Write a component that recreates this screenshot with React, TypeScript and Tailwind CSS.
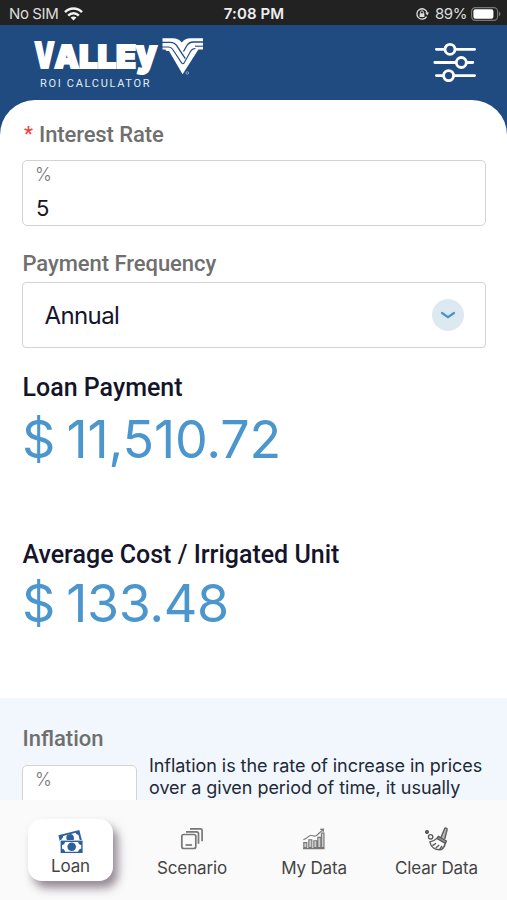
import type { ReactNode } from 'react';

const ROBOTO = "font-['Roboto',sans-serif]";

function StatusBar() {
  return (
    <div className="grid h-[25px] grid-cols-3 items-center bg-[#222222] pt-[2px] text-[15px] leading-[20px] text-[#dedede]">
      <div className="flex items-center gap-[6px] pl-[9px]">
        <span className="tracking-[-0.4px]">No SIM</span>
        <svg width="19" height="14" viewBox="0 0 19 14" fill="none" stroke="#f2f2f2" strokeWidth="2.5">
          <path d="M1 5.2C6 .3 13 .3 18 5.2" />
          <path d="M4.2 8.6c3-3 7.6-3 10.6 0" />
          <path d="M6.6 10.6c1.8-1.6 4-1.6 5.8 0L9.5 13.6Z" fill="#f2f2f2" stroke="none" />
        </svg>
      </div>
      <div className="pl-[1px] text-center font-semibold tracking-[0.1px] text-[#efefef]">7:08 PM</div>
      <div className="flex items-center justify-end pr-[6px]">
        <svg className="mr-[6px]" width="14" height="14" viewBox="0 0 14 14" fill="none" stroke="#dedede">
          <path d="M11.6 9.6A5.2 5.2 0 1 1 12.2 6" strokeWidth="1.3" />
          <path d="M10.2 5.6h3.8l-1.8 2.8Z" fill="#dedede" stroke="none" />
          <rect x="4.6" y="6.2" width="4.8" height="3.8" rx=".6" fill="#dedede" stroke="none" />
          <path d="M5.6 6.4V5.2a1.4 1.4 0 0 1 2.8 0v1.2" strokeWidth="1" />
        </svg>
        <span className="tracking-[-0.4px]">89%</span>
        <svg className="ml-[4px]" width="30" height="14" viewBox="0 0 30 14">
          <rect x=".6" y=".6" width="26" height="12.8" rx="3.8" fill="none" stroke="#777" strokeWidth="1.2" />
          <rect x="2.4" y="2.2" width="20" height="9.6" rx="2" fill="#fff" />
          <path d="M28 4.8c2 .8 2 3.6 0 4.4Z" fill="#777" />
        </svg>
      </div>
    </div>
  );
}

function Logo() {
  return (
    <svg
      width="172"
      height="56"
      viewBox="33 35 172 56"
      className="overflow-visible font-['Inter',sans-serif]"
      fill="#fff"
    >
      <text fontWeight="900" stroke="#fff" strokeWidth="2">
        <tspan x="34.5" y="68" fontSize="36" textLength="20" lengthAdjust="spacingAndGlyphs">V</tspan>
        <tspan x="54.5" y="67.7" fontSize="31" textLength="24.5" lengthAdjust="spacingAndGlyphs">A</tspan>
        <tspan x="79" y="67.7" fontSize="31" textLength="18.5" lengthAdjust="spacingAndGlyphs">L</tspan>
        <tspan x="97.5" y="67.7" fontSize="31" textLength="18.5" lengthAdjust="spacingAndGlyphs">L</tspan>
        <tspan x="116" y="67.7" fontSize="31" textLength="20" lengthAdjust="spacingAndGlyphs">E</tspan>
        <tspan x="136" y="66" fontSize="37" textLength="21" lengthAdjust="spacingAndGlyphs">y</tspan>
      </text>
      {/* Emblem */}
      <path d="M162.5 38.3H173q5.2 0 8.8 4.2 3.4-4.2 8.6-4.2H203v11.2h-4.6l-15.8 24.7-13.6-23.2h-2.5l-1.2-1.5H162.5Z" />
      <g fill="none" stroke="#1f4b80" strokeWidth="1.3">
        <path d="M162 42.3h8.5c3 0 4.6 1 6.2 3.4l8.6 13" />
        <path d="M203.5 42h-10.3c-3.4 0-5 1.3-6.6 4L183.5 51.5" />
        <path d="M162 47h6.6c2 0 3 .7 4 2.3l9 13.6c.8 1.2 1.7 1.2 2.5 0l6.5-11.6c1.1-2 2.2-2.8 4.8-2.8" strokeWidth="1.1" />
        <path d="M203.5 46.2h-8.5" strokeWidth="1.1" />
      </g>
      <circle cx="187.3" cy="73" r="1.3" fill="none" stroke="#a9c4e2" strokeWidth=".7" />
      <text
        x="40"
        y="87.3"
        fontSize="11"
        fill="#e0ecf8"
        textLength="109.5"
        className={ROBOTO}
      >
        ROI CALCULATOR
      </text>
    </svg>
  );
}

function SlidersIcon() {
  return (
    <svg width="44" height="42" viewBox="0 0 44 42" fill="none" stroke="#fff" strokeWidth="2.8" strokeLinecap="round">
      <path d="M3.4 7.3H11M23 7.3h18.6M1.8 20.5H22M34 20.5h5.8M3.4 33.6H10M22 33.6h19.6" />
      <circle cx="17" cy="7.3" r="5" />
      <circle cx="28.3" cy="20.5" r="5" />
      <circle cx="15.6" cy="33.6" r="5" />
    </svg>
  );
}

function MoneyIcon() {
  return (
    <svg width="26" height="24" viewBox="0 0 26 24">
      <g transform="rotate(-14 12 9)">
        <rect x="1.6" y="2.6" width="21.6" height="13" fill="#2d609b" />
        <path d="M6 4.4h13c.2 1.6.9 2.3 2.2 2.5v6H3.6v-6C5 6.6 5.8 6 6 4.4Z" fill="#fff" />
        <circle cx="12.4" cy="8" r="3.8" fill="#2d609b" />
      </g>
      <rect x="2" y="10" width="23" height="13.4" fill="#fff" />
      <rect x="2.6" y="10.6" width="22" height="12.4" fill="#2d609b" />
      <path d="M7 12h13.2c.2 1.8 1.2 2.8 3 3v3.8c-1.8.2-2.8 1.2-3 3H7c-.2-1.8-1.2-2.8-3-3V15c1.8-.2 2.8-1.2 3-3Z" fill="#fff" />
      <circle cx="13.7" cy="16.8" r="4.3" fill="#2d609b" />
    </svg>
  );
}

function LayersIcon() {
  return (
    <svg width="24" height="24" viewBox="0 0 24 24" fill="none" stroke="#777" strokeWidth="1.7">
      <rect x="1.8" y="7.5" width="14" height="14" rx="2" />
      <path d="M6 4.8h10.5a2 2 0 0 1 2 2v10M10 1.8h10.5a1.6 1.6 0 0 1 1.6 1.6v10.8" />
      <path d="M5.5 18h6.6" />
    </svg>
  );
}

function ChartIcon() {
  return (
    <svg width="24" height="22" viewBox="0 0 24 22" fill="#ccc" stroke="#777" strokeWidth="1.1">
      <path d="M1.8 14.6h3v5h-3zM6.8 11.8h3v7.8h-3zM11.8 12.8h3v6.8h-3zM15.8 9.4h3v10.2h-3zM19.4 5h2.6v14.6h-2.6z" />
      <path d="M1.4 11.6C5 11 7 7 9 7.2c2 .1 3 1.8 5 .6 2.5-1.6 4-4 7.2-6.2M18.2 1.4l3.3-.3-.4 3.2M1 20.6h21.5" fill="none" />
    </svg>
  );
}

function BroomIcon() {
  return (
    <svg width="26" height="26" viewBox="0 0 26 26" fill="none" stroke="#5c5c5c" strokeWidth="1.4" strokeLinejoin="round">
      <path d="m17 11.4 3.6-8.7c.6-1.2 2.9-.5 2.5.9l-2.4 9.4" fill="#bbb" />
      <path d="m14.4 10.3 8 4.7-1 2.4-8.6-5Z" fill="#999" />
      <path d="M12.8 12.4c-2 2.2-4.2 3.2-7 3.5 1.2 5.6 5.6 8.5 11.5 7.7 2.4-1.5 3.6-3.6 3.8-6.2" />
      <path d="m8.4 19.6 3.6-2.2M11.8 22l3.4-3.1M15.7 23.4l2.3-3.6" />
      <circle cx="6.6" cy="10.8" r="2.2" />
      <circle cx="3" cy="6" r="1.4" fill="#5c5c5c" />
    </svg>
  );
}

function TabItem({ icon, label, className }: { icon: ReactNode; label: string; className: string }) {
  return (
    <div className={`flex flex-col items-center ${className}`}>
      <div className="flex h-[26px] items-center justify-center">{icon}</div>
      <span className="mt-[4px] leading-[24px] tracking-[-0.15px] whitespace-nowrap">{label}</span>
    </div>
  );
}

export default function App() {
  return (
    <div className="flex h-[900px] w-[507px] flex-col overflow-hidden bg-[#1f4b80] font-['Inter',sans-serif] text-[#14142a]">
      <StatusBar />

      {/* Header */}
      <header className="flex h-[75px] shrink-0 items-start justify-between pt-[10px] pr-[30px] pl-[33px]">
        <Logo />
        <div className="pt-[7px]">
          <SlidersIcon />
        </div>
      </header>

      {/* Loan form */}
      <main className="flex h-[598px] shrink-0 flex-col rounded-t-[35px] bg-white px-[22px]">
        <div className={`mt-[20px] flex h-[28px] items-center pl-[2px] text-[22px] font-medium text-[#6f6f6f] ${ROBOTO}`}>
          <span className="mr-[6px] w-[9px] text-[20px] text-[#f04438]">*</span>
          <span className="tracking-[-0.1px]">Interest Rate</span>
        </div>
        <div className="mt-[12px] flex h-[66px] w-[464px] flex-col rounded-[5px] border-[1.5px] border-[#d3d3d3] pl-[12px]">
          <span className="mt-[3px] text-[18px] leading-[22px] font-light text-[#777]">%</span>
          <span className="mt-[8px] pl-[1px] text-[22px] leading-[28px]">5</span>
        </div>

        <div className={`mt-[24px] h-[28px] pl-[0.5px] text-[22px] leading-[28px] font-medium tracking-[-0.05px] text-[#6f6f6f] ${ROBOTO}`}>
          Payment Frequency
        </div>
        <div className="mt-[4px] flex h-[66px] w-[464px] items-center justify-between rounded-[4px] border-[1.5px] border-[#d3d3d3] pr-[21px] pl-[21.5px]">
          <span className="pt-[1px] text-[24px] tracking-[-0.6px]">Annual</span>
          <span className="flex size-[32px] items-center justify-center rounded-full bg-[#dce9f1]">
            <svg width="16" height="10" viewBox="0 0 16 10" fill="none" stroke="#4b93c6" strokeWidth="2.2" strokeLinecap="round">
              <path d="m2 3 6 4.2 6-4.2" />
            </svg>
          </span>
        </div>

        <div className={`mt-[25px] h-[30px] pl-[0.5px] text-[25px] leading-[30px] font-medium ${ROBOTO}`}>
          Loan Payment
        </div>
        <div className="mt-[7px] h-[60px] text-[52px] leading-[60px] tracking-[-0.2px] text-[#4b96cd] [word-spacing:-3px]">
          $ 11,510.72
        </div>

        <div className={`mt-[70px] h-[30px] pl-[0.5px] text-[25px] leading-[30px] font-medium ${ROBOTO}`}>
          Average Cost / Irrigated Unit
        </div>
        <div className="mt-[4px] h-[60px] text-[52px] leading-[60px] tracking-[-0.4px] text-[#4b96cd] [word-spacing:-3px]">
          $ 133.48
        </div>
      </main>

      {/* Inflation */}
      <section className="flex h-[102px] shrink-0 overflow-hidden bg-[#f1f7fd] pl-[22px]">
        <div className="w-[127px] shrink-0">
          <div className={`mt-[27px] pl-[0.5px] text-[22px] leading-[28px] font-medium text-[#6f6f6f] ${ROBOTO}`}>Inflation</div>
          <div className="mt-[12px] h-[66px] w-[115px] rounded-[5px] border-[1.5px] border-[#d3d3d3] bg-white pl-[12px]">
            <span className="mt-[3px] block text-[18px] leading-[22px] font-light text-[#777]">%</span>
          </div>
        </div>
        <p className="mt-[56.5px] text-[18px] leading-[22.5px] tracking-[-0.05px] whitespace-nowrap text-[#1f2937]">
          Inflation is the rate of increase in prices
          <br />
          over a given period of time, it usually
        </p>
      </section>

      {/* Tab bar */}
      <nav className="flex h-[100px] shrink-0 items-start bg-[#fafafa] text-[17px] text-[#444]">
        <TabItem
          icon={<MoneyIcon />}
          label="Loan"
          className="mt-[19px] ml-[28px] h-[62px] w-[85px] rounded-[14px] bg-white pt-[10px] shadow-[5px_7px_10px_rgba(70,45,65,0.55)] [&>span]:mt-[-1px]"
        />
        <TabItem icon={<LayersIcon />} label="Scenario" className="ml-[19px] w-[120px] pt-[26px]" />
        <TabItem icon={<ChartIcon />} label="My Data" className="ml-[2px] w-[120px] pt-[26px]" />
        <TabItem icon={<BroomIcon />} label="Clear Data" className="ml-[2.5px] w-[120px] pt-[26px]" />
      </nav>
    </div>
  );
}
